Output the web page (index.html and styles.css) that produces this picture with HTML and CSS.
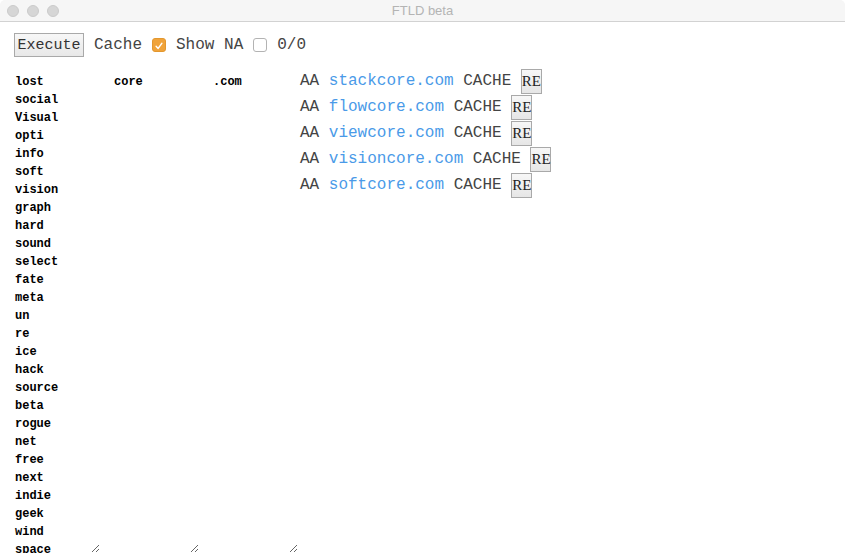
FILE: index.html
```html
<!DOCTYPE html>
<html>
<head>
<meta charset="utf-8">
<title>FTLD beta</title>
<link rel="stylesheet" href="styles.css">
</head>
<body>
<div class="window">
  <div class="titlebar">
    <div class="lights"><span class="light"></span><span class="light"></span><span class="light"></span></div>
    <div class="title">FTLD beta</div>
  </div>
  <div class="app">
    <div class="toolbar">
      <button class="exec">Execute</button>
      <span class="label">Cache</span>
      <span class="check on"><svg viewBox="0 0 14 14" width="14" height="14"><path d="M3.6 7.4 L6 9.8 L10.4 3.8" fill="none" stroke="#fff" stroke-width="1.6" stroke-linecap="round" stroke-linejoin="round"/></svg></span>
      <span class="label">Show NA</span>
      <span class="check"></span>
      <span class="label">0/0</span>
    </div>
    <div class="main">
      <textarea class="list" readonly>lost
social
Visual
opti
info
soft
vision
graph
hard
sound
select
fate
meta
un
re
ice
hack
source
beta
rogue
net
free
next
indie
geek
wind
space</textarea>
      <textarea class="list" readonly>core</textarea>
      <textarea class="list" readonly>.com</textarea>
      <div class="results">
        <div class="row">AA <a class="dom">stackcore.com</a> CACHE <button class="re">RE</button></div>
        <div class="row">AA <a class="dom">flowcore.com</a> CACHE <button class="re">RE</button></div>
        <div class="row">AA <a class="dom">viewcore.com</a> CACHE <button class="re">RE</button></div>
        <div class="row">AA <a class="dom">visioncore.com</a> CACHE <button class="re">RE</button></div>
        <div class="row">AA <a class="dom">softcore.com</a> CACHE <button class="re">RE</button></div>
      </div>
    </div>
  </div>
</div>
</body>
</html>
```

FILE: styles.css
```css
html, body {
  margin: 0;
  padding: 0;
  background: #ffffff;
  overflow: hidden;
}
.window {
  width: 845px;
  height: 556px;
  overflow: hidden;
  background: #fff;
}
.titlebar {
  height: 21px;
  background: #f6f6f6;
  border-bottom: 1px solid #d2d2d2;
  border-radius: 5px 5px 0 0;
  position: relative;
  display: flex;
  align-items: center;
  justify-content: center;
}
.lights {
  position: absolute;
  left: 7px;
  top: 5px;
  display: flex;
  gap: 8px;
}
.light {
  width: 12px;
  height: 12px;
  border-radius: 50%;
  background: #d6d6d6;
  box-sizing: border-box;
  border: 0.5px solid #cbcbcb;
}
.title {
  font-family: "Liberation Sans", Arial, sans-serif;
  font-size: 13px;
  color: #b4b4b4;
}
.app {
  padding: 11px 0 0 14px;
}
.toolbar {
  display: flex;
  align-items: center;
  gap: 10px;
  height: 24px;
  font-family: "Liberation Mono", "Courier New", monospace;
  font-size: 16px;
  color: #444;
}
.exec {
  font-family: "Liberation Mono", "Courier New", monospace;
  font-size: 15px;
  color: #333;
  width: 70px;
  height: 24px;
  padding: 0;
  margin: 0;
  border: 1px solid #a9a9a9;
  border-radius: 0;
  background: linear-gradient(#f7f7f7, #e8e8e8);
}
.label {
  white-space: pre;
}
.check {
  width: 14px;
  height: 14px;
  box-sizing: border-box;
  border: 1px solid #b3b3b3;
  border-radius: 3px;
  background: #fff;
  display: flex;
}
.check.on {
  background: #f0a33a;
  border-color: #e3972e;
}
.main {
  display: flex;
  align-items: flex-start;
  margin-top: 11px;
}
.list {
  width: 87px;
  height: 482px;
  margin: 3px 13px 0 -1px;
  padding: 2px;
  border: none;
  outline: none;
  overflow: hidden;
  resize: both;
  font-family: "Liberation Mono", "Courier New", monospace;
  font-weight: bold;
  font-size: 12px;
  line-height: 18px;
  color: #000;
  background: #fff;
  box-sizing: border-box;
}
.list:last-of-type {
  margin-right: 0;
}
.results {
  margin-left: 2px;
  display: flex;
  flex-direction: column;
}
.row {
  height: 26px;
  display: flex;
  align-items: center;
  white-space: pre;
  font-family: "Liberation Mono", "Courier New", monospace;
  font-size: 16px;
  color: #444;
}
.dom {
  color: #4a9ae8;
  text-decoration: none;
}
.re {
  font-family: "Liberation Serif", "Times New Roman", serif;
  font-size: 15px;
  font-weight: normal;
  color: #222;
  width: 21px;
  height: 25px;
  padding: 0;
  margin: 0;
  border: 1px solid #a9a9a9;
  border-radius: 0;
  background: linear-gradient(#f7f7f7, #e6e6e6);
}
```
